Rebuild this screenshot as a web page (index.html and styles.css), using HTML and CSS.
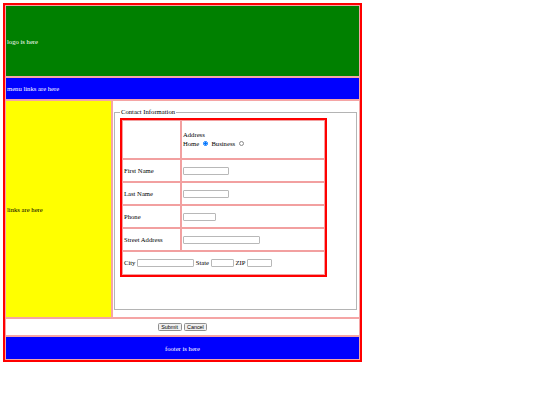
FILE: index.html
```html
<!DOCTYPE html>
<html lang="en">
<head>
<meta charset="utf-8">
<title>Contact</title>
<link rel="stylesheet" href="styles.css">
</head>
<body>
<div class="page">
  <header class="logo">logo is here</header>
  <nav class="menu">menu links are here</nav>
  <aside class="links">links are here</aside>
  <main class="content">
    <form class="contact-form" id="contact">
      <fieldset class="contact">
        <legend>Contact Information</legend>
        <table class="fields">
          <tr class="row-addr">
            <td class="label"></td>
            <td class="value addr">Address<br>Home <input class="radio" type="radio" name="addr" checked> Business <input class="radio" type="radio" name="addr"></td>
          </tr>
          <tr class="row">
            <td class="label">First Name</td>
            <td class="value"><input class="in in-name" type="text"></td>
          </tr>
          <tr class="row">
            <td class="label">Last Name</td>
            <td class="value"><input class="in in-name" type="text"></td>
          </tr>
          <tr class="row">
            <td class="label">Phone</td>
            <td class="value"><input class="in in-phone" type="text"></td>
          </tr>
          <tr class="row">
            <td class="label">Street Address</td>
            <td class="value"><input class="in in-street" type="text"></td>
          </tr>
          <tr class="row-last">
            <td class="value" colspan="2">City <input class="in in-city" type="text"> State <input class="in in-state" type="text"> ZIP <input class="in in-zip" type="text"></td>
          </tr>
        </table>
      </fieldset>
    </form>
  </main>
  <div class="actions">
    <button class="btn" type="submit" form="contact">Submit</button>
    <button class="btn" type="reset" form="contact">Cancel</button>
  </div>
  <footer class="footer">footer is here</footer>
</div>
</body>
</html>
```
FILE: styles.css
```css
html, body {
  margin: 0;
  padding: 0;
  background: #fff;
}

body {
  padding: 3px;
  font-family: "Liberation Serif", "Times New Roman", serif;
  font-size: 6.65px;
  color: #000;
}

.page {
  width: 353px;
  display: grid;
  grid-template-columns: 105px 246px;
  grid-template-rows: 70px 21px 216px 16px 22px;
  gap: 2px;
  padding: 1px;
  background: #f5a5a5;
  border: 2px solid #f00;
}

.logo,
.menu,
.links {
  display: flex;
  align-items: center;
  padding-left: 1px;
}

.logo {
  grid-column: 1 / -1;
  background: #008000;
  color: #fff;
}

.menu {
  grid-column: 1 / -1;
  background: #0000ff;
  color: #fff;
}

.links {
  background: #ffff00;
}

.content {
  background: #fff;
  display: flex;
  align-items: center;
  padding: 0 2px 0 1px;
}

.contact-form {
  width: 100%;
  margin: 0;
}

.contact {
  box-sizing: border-box;
  height: 202px;
  margin: 0;
  padding: 2px 5px;
  border: 1px solid #b4b4b4;
}

.contact legend {
  padding: 0 1px;
  line-height: 8px;
}

.fields {
  box-sizing: border-box;
  width: 207px;
  border: 2px solid #f00;
  border-collapse: separate;
  border-spacing: 0;
  font-size: 6.65px;
}

.fields td {
  border: 1px solid #f2a0a0;
  padding: 0 1px;
  vertical-align: middle;
}

.fields .label {
  width: 55px;
}

.row-addr {
  height: 39px;
}

.row {
  height: 23px;
}

.row-last {
  height: 24px;
}

.addr {
  line-height: 8.7px;
}

.in {
  box-sizing: border-box;
  height: 8px;
  margin: 0;
  padding: 0;
  border: 1px solid #b8b8b8;
  border-radius: 1px;
  background: #fff;
  vertical-align: middle;
  font-size: 5px;
}

.in-name { width: 46px; }
.in-phone { width: 33px; }
.in-street { width: 77px; }
.in-city { width: 57px; }
.in-state { width: 23px; }
.in-zip { width: 25px; }

.radio {
  appearance: none;
  -webkit-appearance: none;
  box-sizing: border-box;
  width: 5px;
  height: 5px;
  margin: 0 1.3px 0 2.6px;
  border: 1px solid #8a8a8a;
  border-radius: 50%;
  background: #fff;
  vertical-align: -0.5px;
}

.radio:checked {
  border-color: #0075ff;
  background: radial-gradient(circle, #0075ff 0 1.2px, #fff 1.4px);
}

.actions {
  grid-column: 1 / -1;
  background: #fff;
  display: flex;
  align-items: center;
  justify-content: center;
  gap: 2px;
}

.btn {
  box-sizing: border-box;
  height: 8px;
  margin: 0;
  padding: 0 2.5px;
  border: 1px solid #8f8f8f;
  border-radius: 1.5px;
  background: #efefef;
  font-family: "Liberation Sans", Arial, sans-serif;
  font-size: 5.4px;
  line-height: 6px;
  color: #000;
}

.footer {
  grid-column: 1 / -1;
  background: #0000ff;
  color: #fff;
  display: flex;
  align-items: center;
  justify-content: center;
}
```
